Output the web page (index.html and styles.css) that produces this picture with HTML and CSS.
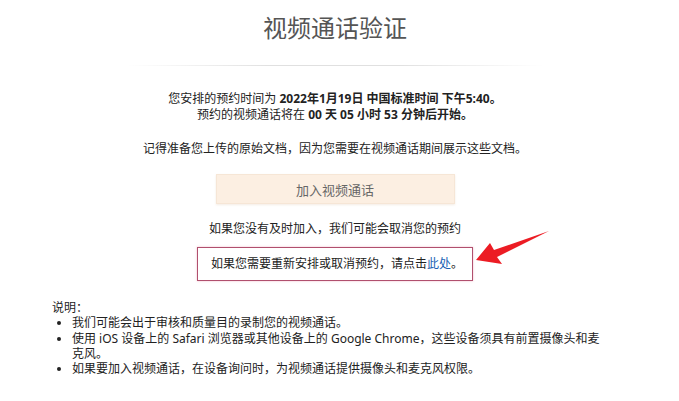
FILE: index.html
```html
<!DOCTYPE html>
<html lang="zh-CN">
<head>
    <meta charset="UTF-8">
    <meta name="viewport" content="width=device-width, initial-scale=1.0">
    <title>视频通话验证</title>
    <link rel="stylesheet" href="styles.css">
</head>
<body>

    <div class="page">
        <h1 class="title">视频通话验证</h1>
        <div class="divider"></div>

        <p class="schedule">您安排的预约时间为 <b>2022年1月19日 中国标准时间 下午5:40。</b><br>
            预约的视频通话将在 <b>00 天 05 小时 53 分钟后开始。</b></p>

        <p class="reminder">记得准备您上传的原始文档，因为您需要在视频通话期间展示这些文档。</p>

        <div class="actions">
            <button class="join">加入视频通话</button>
        </div>

        <p class="warning">如果您没有及时加入，我们可能会取消您的预约</p>

        <div class="actions">
            <div class="reschedule">如果您需要重新安排或取消预约，请点击<a href="#" class="link">此处</a>。</div>
        </div>

        <div class="notes">
            <p class="notes-title">说明：</p>
            <ul>
                <li>我们可能会出于审核和质量目的录制您的视频通话。</li>
                <li>使用 iOS 设备上的 Safari 浏览器或其他设备上的 Google Chrome，这些设备须具有前置摄像头和麦克风。</li>
                <li>如果要加入视频通话，在设备询问时，为视频通话提供摄像头和麦克风权限。</li>
            </ul>
        </div>
    </div>

    <svg class="arrow" width="80" height="40" viewBox="0 0 80 40">
        <polygon points="2,34 16,17 20,24 75,5 23,31 28,38" fill="#ec1c24"/>
    </svg>

</body>
</html>
```

FILE: styles.css
```css
body { margin: 0; font-family: "Noto Sans", "Noto Sans CJK SC", sans-serif; font-size: 12px; color: #222; background: #fff; }
.page { width: 566px; margin-left: 52px; }
.title { margin: 12px 0 0; font-size: 24px; font-weight: normal; line-height: 32px; color: #555; text-align: center; }
.divider { height: 1px; width: 416px; margin: 21px auto 0; background: linear-gradient(to right, rgba(0,0,0,0), #e0e0e0 35%, #e0e0e0 65%, rgba(0,0,0,0)); box-shadow: 0 4px 6px rgba(0,0,0,0.03); }
.schedule { margin: 25px 0 0; line-height: 16px; text-align: center; }
.schedule b { font-weight: bold; }
.reminder { margin: 18px 0 0; line-height: 16px; text-align: center; }
.actions { text-align: center; }
.join { width: 239px; height: 30px; margin-top: 17px; font-family: inherit; font-size: 13px; color: #666; background: #fcefe2; border: 1px solid #f6e6d6; box-shadow: 0 1px 2px rgba(200,160,120,0.2); cursor: pointer; }
.warning { margin: 17px 0 0; line-height: 16px; text-align: center; }
.reschedule { display: inline-block; margin-top: 10px; padding: 8px 9px 8px 13px; line-height: 16px; border: 1px solid #b0506e; box-shadow: 0 0 2px rgba(230,120,150,0.5); }
.link { color: #1a5fb4; text-decoration: none; }
.notes { margin-top: 19px; line-height: 15.3px; }
.notes-title { margin: 0; }
.notes ul { margin: 0; padding: 0 10px 0 20px; }
.arrow { position: absolute; left: 474px; top: 226px; }
```
